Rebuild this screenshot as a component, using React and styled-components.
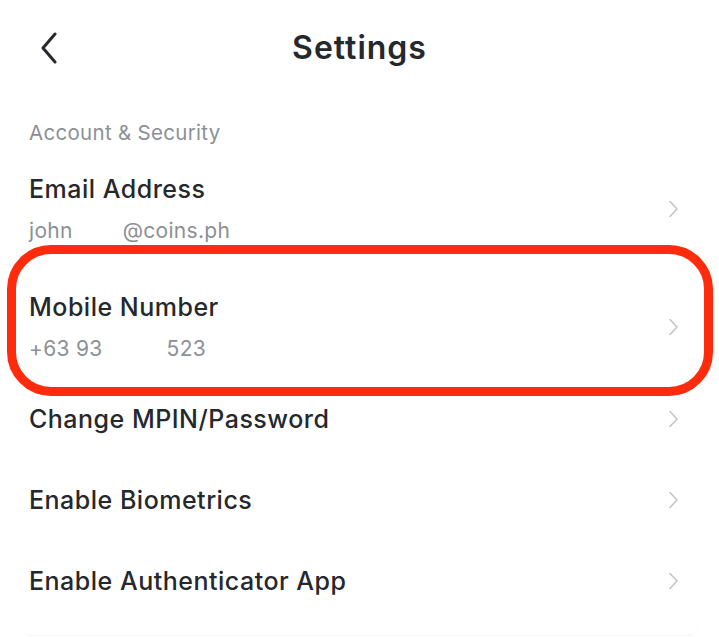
import React from "react";
import styled, { createGlobalStyle } from "styled-components";

const GlobalStyle = createGlobalStyle`
  html, body {
    margin: 0;
    padding: 0;
    background: #ffffff;
  }
  body {
    font-family: Inter, "Noto Sans", sans-serif;
    -webkit-font-smoothing: antialiased;
  }
`;

const Page = styled.div`
  width: 719px;
  height: 637px;
  overflow: hidden;
  background: #fff;
  display: flex;
  flex-direction: column;
`;

const Header = styled.header`
  height: 95px;
  display: grid;
  grid-template-columns: 80px 1fr 80px;
  align-items: center;
`;

const BackButton = styled.button`
  border: 0;
  background: none;
  padding: 0 0 0 38px;
  height: 40px;
  display: flex;
  align-items: center;
  color: #25282c;
  cursor: pointer;
`;

const Title = styled.h1`
  margin: 0;
  text-align: center;
  font-size: 32px;
  font-weight: 600;
  color: #25282c;
  letter-spacing: 1px;
`;

const SectionLabel = styled.div`
  margin: 28px 0 0;
  padding: 0 29px;
  font-size: 20.5px;
  line-height: 20px;
  letter-spacing: 0.3px;
  color: #8c9096;
`;

const List = styled.div`
  margin: 0 20px;
  padding-bottom: 13px;
  border-bottom: 1px solid #f5f6f7;
  border-radius: 0 0 12px 12px;
`;

const Row = styled.div`
  position: relative;
  display: flex;
  align-items: center;
  justify-content: space-between;
  padding: ${(p) => (p.$double ? "31px 19px 17px 9px" : "25px 19px 26px 9px")};
`;

const RowText = styled.div`
  display: flex;
  flex-direction: column;
  gap: 14px;
`;

const RowTitle = styled.div`
  font-size: 25px;
  line-height: 30px;
  font-weight: 500;
  letter-spacing: 0.5px;
  color: #25282c;
`;

const RowSub = styled.div`
  display: flex;
  gap: ${(p) => p.$gap}px;
  font-size: 21px;
  line-height: 26px;
  letter-spacing: 0.3px;
  color: #8c9096;
`;

const Highlight = styled.div`
  position: absolute;
  top: -16px;
  bottom: -17px;
  left: -13px;
  right: -14px;
  border: 9px solid #fe2b0c;
  border-radius: 44px;
  pointer-events: none;
`;

const Chevron = () => (
  <svg width="14" height="20" viewBox="0 0 14 20" fill="none">
    <path
      d="M4 2.5L11 10L4 17.5"
      stroke="#c2c5c9"
      strokeWidth="1.6"
      strokeLinecap="round"
      strokeLinejoin="round"
    />
  </svg>
);

const BackIcon = () => (
  <svg width="22" height="32" viewBox="0 0 22 32" fill="none">
    <path
      d="M17 2L5 16L17 30"
      stroke="currentColor"
      strokeWidth="3"
      strokeLinecap="round"
      strokeLinejoin="round"
    />
  </svg>
);

// sub values are partly masked in the source, so the visible pieces sit apart
const items = [
  { title: "Email Address", sub: ["john", "@coins.ph"], gap: 50 },
  { title: "Mobile Number", sub: ["+63 93", "523"], gap: 64, marked: true },
  { title: "Change MPIN/Password" },
  { title: "Enable Biometrics" },
  { title: "Enable Authenticator App" },
];

export default function App() {
  return (
    <>
      <GlobalStyle />
      <Page>
        <Header>
          <BackButton aria-label="Back">
            <BackIcon />
          </BackButton>
          <Title>Settings</Title>
          <div />
        </Header>
        <SectionLabel>Account &amp; Security</SectionLabel>
        <List>
          {items.map((item) => (
            <Row key={item.title} $double={!!item.sub}>
              <RowText>
                <RowTitle>{item.title}</RowTitle>
                {item.sub && (
                  <RowSub $gap={item.gap}>
                    {item.sub.map((part) => (
                      <span key={part}>{part}</span>
                    ))}
                  </RowSub>
                )}
              </RowText>
              <Chevron />
              {item.marked && <Highlight />}
            </Row>
          ))}
        </List>
      </Page>
    </>
  );
}
